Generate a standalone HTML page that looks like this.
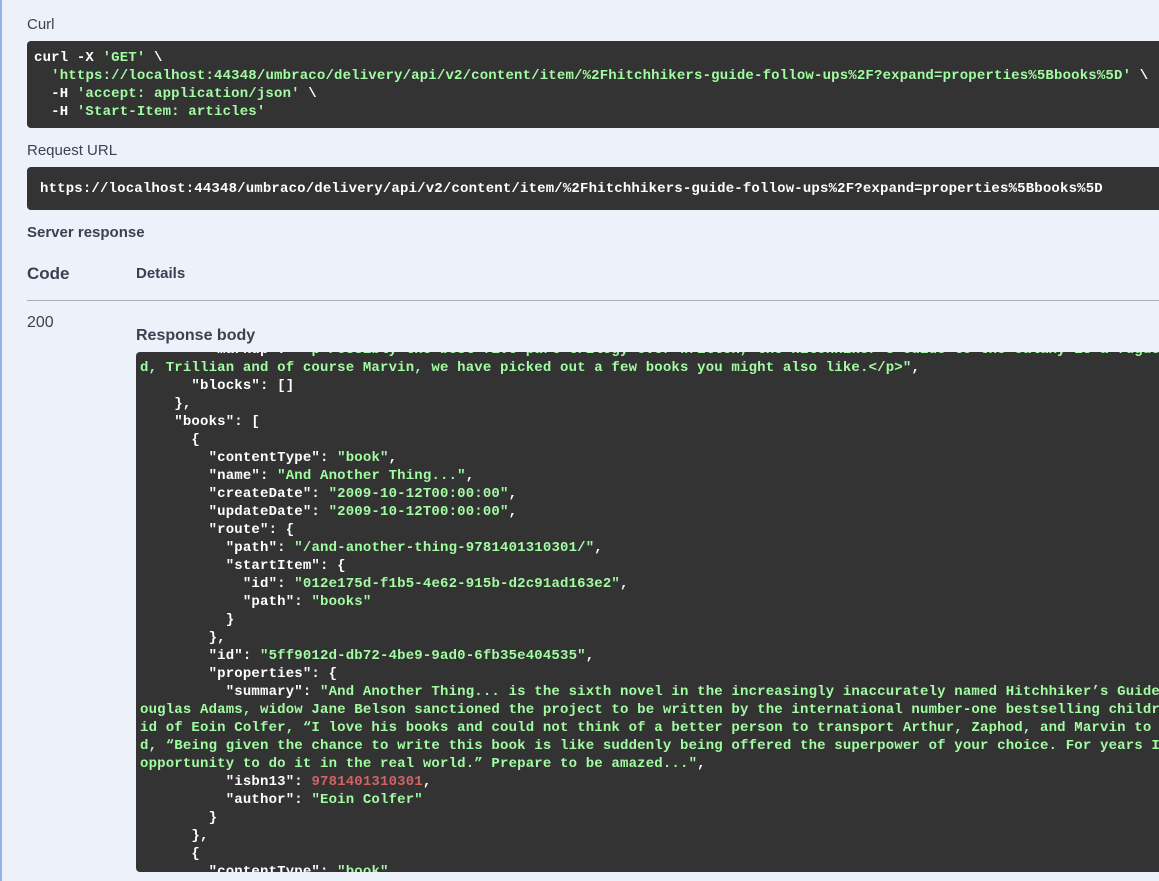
<!DOCTYPE html>
<html><head><style>
html,body{margin:0;padding:0}
body{width:1159px;height:881px;background:#edf2fa;position:relative;overflow:hidden;font-family:"Liberation Sans",Arial,sans-serif;color:#3b4151}
.lb{position:absolute;left:0;top:0;width:2px;height:881px;background:#8fb4e8}
.t{position:absolute;font-size:15px;white-space:nowrap}
.box{position:absolute;background:#333;border-radius:4px 0 0 4px;overflow:hidden;left:27px;right:-10px}
pre{margin:0;font-family:"Liberation Mono","DejaVu Sans Mono",monospace;font-weight:bold;font-size:14px;letter-spacing:0.17px;line-height:18px;color:#fff;white-space:pre;position:absolute}
.s{color:#a2fca2}.n{color:#d36363}
</style></head><body>
<div class="lb"></div>
<div class="t" style="left:27px;top:16px">Curl</div>
<div class="box" style="top:41px;height:87px"><pre style="left:7px;top:8px">curl -X <span class="s">'GET'</span> \
  <span class="s">'https://localhost:44348/umbraco/delivery/api/v2/content/item/%2Fhitchhikers-guide-follow-ups%2F?expand=properties%5Bbooks%5D'</span> \
  -H <span class="s">'accept: application/json'</span> \
  -H <span class="s">'Start-Item: articles'</span></pre></div>
<div class="t" style="left:27px;top:142px">Request URL</div>
<div class="box" style="top:167px;height:43px"><pre style="left:13px;top:13px">https://localhost:44348/umbraco/delivery/api/v2/content/item/%2Fhitchhikers-guide-follow-ups%2F?expand=properties%5Bbooks%5D</pre></div>
<div class="t" style="left:27px;top:224px;font-weight:bold;color:#3b4151">Server response</div>
<div class="t" style="left:27px;top:264px;font-size:17px;font-weight:bold">Code</div>
<div class="t" style="left:136px;top:265px;font-weight:bold">Details</div>
<div style="position:absolute;left:27px;right:0;top:300px;height:1px;background:#a9adb7"></div>
<div class="t" style="left:27px;top:314px;font-size:16px">200</div>
<div class="t" style="left:136px;top:327px;font-weight:bold;font-size:16px">Response body</div>
<div class="box" style="left:136px;top:352px;height:520px"><pre style="left:4px;top:-11px">        "markup": <span class="s">"&lt;p&gt;Possibly the best five-part trilogy ever written, the Hitchhiker's Guide to the Galaxy is a fugue and</span>
<span class="s">d, Trillian and of course Marvin, we have picked out a few books you might also like.&lt;/p&gt;"</span>,
      "blocks": []
    },
    "books": [
      {
        "contentType": <span class="s">"book"</span>,
        "name": <span class="s">"And Another Thing..."</span>,
        "createDate": <span class="s">"2009-10-12T00:00:00"</span>,
        "updateDate": <span class="s">"2009-10-12T00:00:00"</span>,
        "route": {
          "path": <span class="s">"/and-another-thing-9781401310301/"</span>,
          "startItem": {
            "id": <span class="s">"012e175d-f1b5-4e62-915b-d2c91ad163e2"</span>,
            "path": <span class="s">"books"</span>
          }
        },
        "id": <span class="s">"5ff9012d-db72-4be9-9ad0-6fb35e404535"</span>,
        "properties": {
          "summary": <span class="s">"And Another Thing... is the sixth novel in the increasingly inaccurately named Hitchhiker’s Guide</span>
<span class="s">ouglas Adams, widow Jane Belson sanctioned the project to be written by the international number-one bestselling children</span>
<span class="s">id of Eoin Colfer, “I love his books and could not think of a better person to transport Arthur, Zaphod, and Marvin to</span>
<span class="s">d, “Being given the chance to write this book is like suddenly being offered the superpower of your choice. For years I</span>
<span class="s">opportunity to do it in the real world.” Prepare to be amazed..."</span>,
          "isbn13": <span class="n">9781401310301</span>,
          "author": <span class="s">"Eoin Colfer"</span>
        }
      },
      {
        "contentType": <span class="s">"book"</span>,</pre></div>
</body></html>
